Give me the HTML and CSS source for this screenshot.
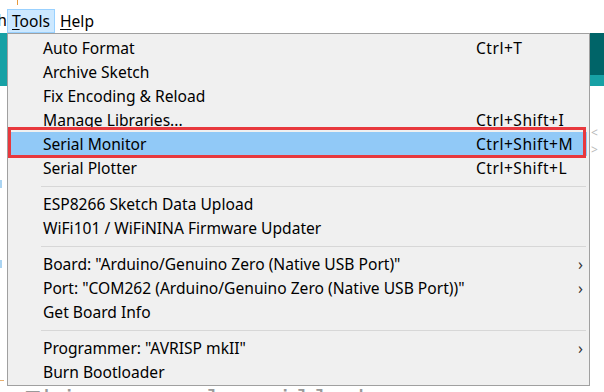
FILE: index.html
```html
<!doctype html>
<html>
<head>
    <meta charset="utf-8" />
    <title>Arduino - Tools menu</title>
    <link rel="stylesheet" href="styles.css">
</head>
<body>

<div class="window">
    <div class="menubar">
        <span class="menu clipped">Sketch</span>
        <span class="menu open"><u>T</u>ools</span>
        <span class="menu"><u>H</u>elp</span>
    </div>

    <div class="toolbar">
        <span class="tool-btn"></span>
    </div>
    <div class="tabs"></div>

    <div class="editor">
        <div class="code-line"></div>
        <div class="code-line"><span class="dot blue"></span></div>
        <div class="code-line"></div>
        <div class="code-line"><span class="dot blue"></span></div>
        <div class="code-line"></div>
        <div class="code-line"></div>
        <div class="code-line"><span class="dot orange"></span></div>
        <div class="comment">This example will decomp so commands</div>
    </div>

    <span class="arrows">&lt; &gt;</span>

    <!-- Tools dropdown -->
    <div class="dropdown">
        <div class="item"><span class="label">Auto Format</span><span class="key">Ctrl+T</span></div>
        <div class="item"><span class="label">Archive Sketch</span></div>
        <div class="item"><span class="label">Fix Encoding &amp; Reload</span></div>
        <div class="item"><span class="label">Manage Libraries...</span><span class="key">Ctrl+Shift+I</span></div>
        <div class="item active"><span class="label">Serial Monitor</span><span class="key">Ctrl+Shift+M</span></div>
        <div class="item"><span class="label">Serial Plotter</span><span class="key">Ctrl+Shift+L</span></div>
        <div class="sep"></div>
        <div class="item"><span class="label">ESP8266 Sketch Data Upload</span></div>
        <div class="item"><span class="label">WiFi101 / WiFiNINA Firmware Updater</span></div>
        <div class="sep"></div>
        <div class="item"><span class="label">Board: "Arduino/Genuino Zero (Native USB Port)"</span><span class="sub">&#8250;</span></div>
        <div class="item"><span class="label">Port: "COM262 (Arduino/Genuino Zero (Native USB Port))"</span><span class="sub">&#8250;</span></div>
        <div class="item"><span class="label">Get Board Info</span></div>
        <div class="sep"></div>
        <div class="item"><span class="label">Programmer: "AVRISP mkII"</span><span class="sub">&#8250;</span></div>
        <div class="item"><span class="label">Burn Bootloader</span></div>

        <div class="callout"></div>
    </div>
</div>

</body>
</html>
```

FILE: styles.css
```css
*{
    box-sizing: border-box;
}

body{
    margin:0px;
    background:#ffffff;
    font-family: "Noto Sans", "Open Sans", sans-serif;
    font-size:15.6px;
    color:#000000;
}

.window{
    position: relative;
    width:604px;
    height:392px;
    overflow:hidden;
}

.menubar{
    height:33px;
    display:flex;
    align-items:flex-end;
    position: relative;
}

.menubar::before{
    content:"";
    position:absolute;
    left:17px;
    top:0px;
    width:1px;
    height:5px;
    background:#e89a3c;
}

.menu{
    height:24px;
    line-height:22px;
    padding:0px 4px;
    border:1px solid transparent;
}

.menu.clipped{
    width:7px;
    padding:0px;
    border:none;
    overflow:hidden;
    direction:rtl;
    white-space:nowrap;
}

.menu.open{
    width:48px;
    background:#cce8ff;
    border-color:#99d1ff;
    padding:0px 0px 0px 4px;
}

.menu u{
    text-decoration-thickness:1px;
    text-underline-offset:2px;
}

.toolbar{
    height:42px;
    background:#006468;
}

.tool-btn{
    display:block;
    width:7px;
    height:42px;
    background:#17a1a5;
}

.tabs{
    height:11px;
    background:#17a1a5;
}

.editor{
    padding-top:40px;
    font-family: "Liberation Mono", monospace;
}

.code-line{
    height:40px;
    position: relative;
}

.dot{
    position:absolute;
    left:0px;
    top:14px;
    width:2px;
    height:8px;
}

.dot.blue{
    background:#aad4f2;
}

.dot.orange{
    height:1px;
    width:4px;
    background:#e8b070;
}

.comment{
    position:absolute;
    left:25px;
    top:388px;
    font-size:26px;
    line-height:26px;
    color:#999999;
    letter-spacing:2.4px;
    white-space:nowrap;
}

.arrows{
    position:absolute;
    left:591px;
    top:124px;
    font-size:12px;
    color:#b9b9b9;
    letter-spacing:2px;
}

/* dropdown */

.dropdown{
    position:absolute;
    left:7px;
    top:33px;
    width:583px;
    background:#f0f0f0;
    border:1px solid #a0a0a0;
    padding:2px 2px 1px 2px;
}

.item{
    height:24px;
    display:flex;
    align-items:center;
    padding-left:33px;
    white-space:nowrap;
    position: relative;
}

.item.active{
    background:#91c9f7;
}

.label{
    flex:1;
}

.key{
    width:111px;
    letter-spacing:0.5px;
}

.sub{
    width:9px;
    font-size:16px;
    color:#333333;
}

.sep{
    height:12px;
    margin-left:31px;
    margin-right:1px;
    display:flex;
    align-items:center;
}

.sep::after{
    content:"";
    display:block;
    width:100%;
    height:1px;
    background:#d7d7d7;
}

.callout{
    position:absolute;
    left:0px;
    top:93px;
    width:578px;
    height:31px;
    border:3px solid #e8383d;
}
```
